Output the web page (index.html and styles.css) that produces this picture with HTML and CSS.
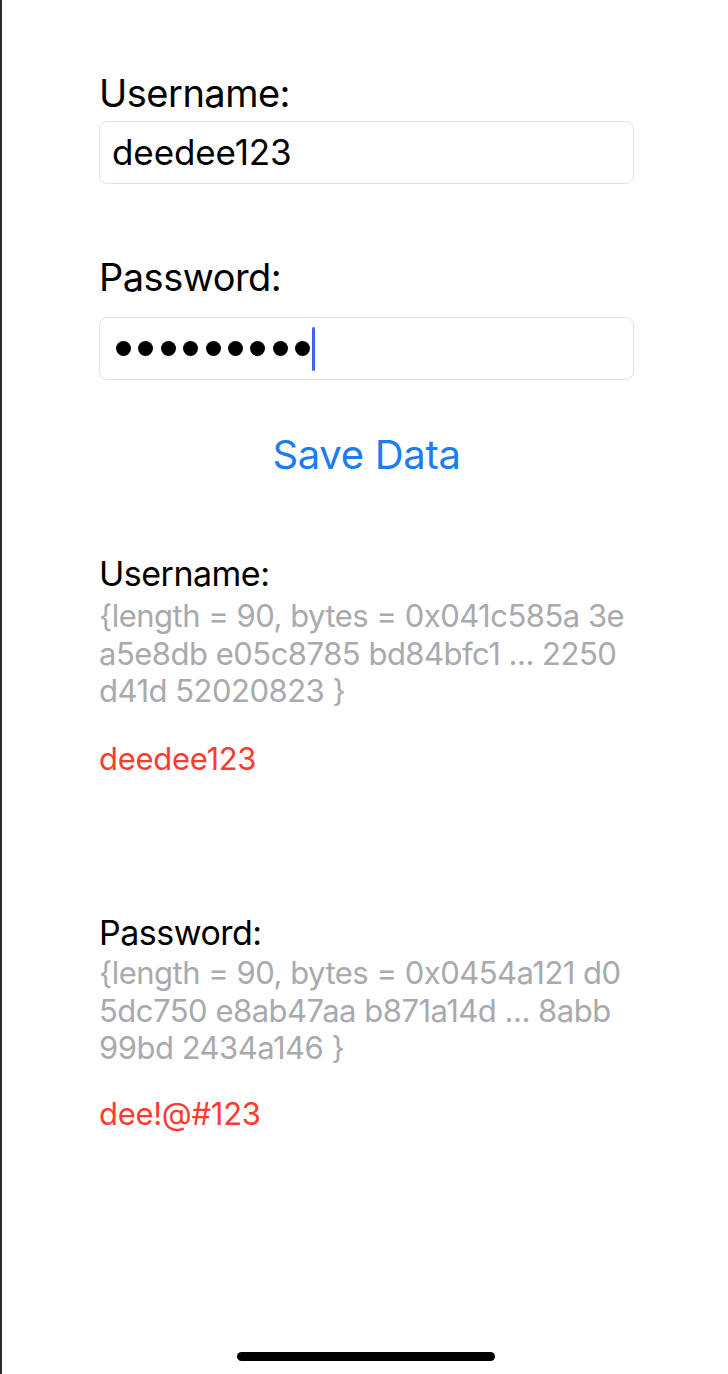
FILE: index.html
```html
<!DOCTYPE html>
<html lang="en">
<head>
<meta charset="utf-8">
<title>Keychain Demo</title>
<link rel="stylesheet" href="styles.css">
</head>
<body>
<div class="screen">
  <main class="form">
    <label class="field-label first">Username:</label>
    <div class="input"><span class="input-text">deedee123</span></div>

    <label class="field-label second">Password:</label>
    <div class="input password">
      <span class="dots">
        <span class="dot"></span><span class="dot"></span><span class="dot"></span>
        <span class="dot"></span><span class="dot"></span><span class="dot"></span>
        <span class="dot"></span><span class="dot"></span><span class="dot"></span>
      </span>
      <span class="caret"></span>
    </div>

    <button class="save">Save Data</button>

    <section class="result result-user">
      <div class="result-label">Username:</div>
      <div class="bytes">
        <span class="line">{length = 90, bytes = 0x041c585a 3e</span>
        <span class="line">a5e8db e05c8785 bd84bfc1 ... 2250</span>
        <span class="line">d41d 52020823 }</span>
      </div>
      <div class="plain">deedee123</div>
    </section>

    <section class="result result-pass">
      <div class="result-label">Password:</div>
      <div class="bytes">
        <span class="line">{length = 90, bytes = 0x0454a121 d0</span>
        <span class="line">5dc750 e8ab47aa b871a14d ... 8abb</span>
        <span class="line">99bd 2434a146 }</span>
      </div>
      <div class="plain">dee!@#123</div>
    </section>
  </main>
  <div class="home-indicator"></div>
</div>
</body>
</html>
```

FILE: styles.css
```css
* { box-sizing: border-box; }

html, body {
  margin: 0;
  padding: 0;
  background: #ffffff;
}

body {
  font-family: Inter, "Noto Sans", "Liberation Sans", sans-serif;
  color: #000;
}

.screen {
  min-height: 1374px;
  border-left: 2px solid #2b2b2b;
  display: flex;
  flex-direction: column;
}

.form {
  padding: 70px 0 0 97px;
  width: 632px;
  display: flex;
  flex-direction: column;
}

.field-label {
  display: block;
  font-size: 38px;
  line-height: 46px;
  letter-spacing: -0.5px;
}

.field-label.second { margin-top: 70px; }

.input {
  margin-top: 5px;
  width: 535px;
  height: 63px;
  border: 1px solid #e3e3e5;
  border-radius: 8px;
  display: flex;
  align-items: center;
  padding: 0 0 1px 12px;
}

.field-label.second + .input { margin-top: 17px; }

.input-text {
  font-size: 35px;
  line-height: 40px;
  letter-spacing: -0.1px;
}

.input.password {
  padding: 0 0 0 16px;
}

.dots {
  display: flex;
  gap: 7.4px;
}

.dot {
  width: 15px;
  height: 15px;
  border-radius: 50%;
  background: #000;
}

.caret {
  width: 3px;
  height: 44px;
  margin-left: 2px;
  background: #3d66e0;
  border-radius: 1.5px;
}

.save {
  margin: 51px 0 0;
  align-self: center;
  width: 535px;
  padding: 0;
  border: 0;
  background: none;
  font-family: inherit;
  font-size: 40px;
  line-height: 48px;
  letter-spacing: -0.3px;
  color: #1c7cf4;
  text-align: center;
}

.result { display: flex; flex-direction: column; }
.result-user { margin-top: 75px; }
.result-pass { margin-top: 136px; }

.result-label {
  font-size: 34px;
  line-height: 40px;
  letter-spacing: -0.5px;
}

.bytes {
  margin-top: 3px;
  color: #a9a9ae;
  font-size: 31px;
  line-height: 37.5px;
  letter-spacing: -0.5px;
}

.result-pass .bytes { margin-top: 1px; }

.line {
  display: block;
  white-space: nowrap;
}

.plain {
  margin-top: 30px;
  color: #ff3b30;
  font-size: 31px;
  line-height: 37.5px;
  letter-spacing: -0.3px;
}

.result-pass .plain { margin-top: 28px; }

.home-indicator {
  margin: auto 0 13px 235px;
  width: 258px;
  height: 9px;
  border-radius: 5px;
  background: #000;
}
```
